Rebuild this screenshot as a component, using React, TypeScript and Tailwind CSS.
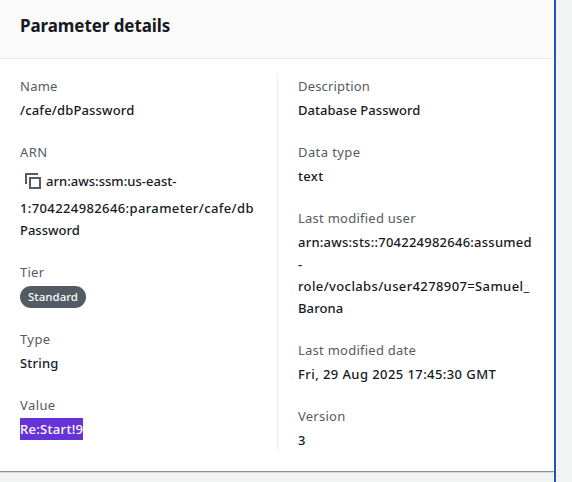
import type { ReactNode } from "react";

function Field({ label, labelClass = "tracking-[0.25px]", children }: { label: string; labelClass?: string; children: ReactNode }) {
  return (
    <div>
      <div className="mb-0.5 h-[22px] text-[#545b64]">
        <span className={labelClass}>{label}</span>
      </div>
      <div className="font-medium text-[#16191f]">{children}</div>
    </div>
  );
}

function CopyIcon() {
  return (
    <svg width="16" height="16" viewBox="0 0 16 16" fill="none" stroke="#545b64" strokeWidth="2" className="shrink-0">
      <path d="M1 11V1h12" />
      <path d="M5 5h10v10H5z" />
    </svg>
  );
}

export default function App() {
  return (
    <div className="flex h-[482px] w-[572px] overflow-hidden bg-[#f2f3f3] font-['Noto_Sans',sans-serif] text-[13px] leading-[22px] whitespace-nowrap">
      <div className="w-[554px]">
        <section className="h-[472px] border-b border-[#879596] bg-white shadow-[0_1px_0_0_#d5dbdb]">
          <header className="flex h-[59px] items-start border-b border-[#eaeded] bg-[#fafafa] pt-[15px] pl-5">
            <h2 className="text-[17px] leading-[22px] font-bold tracking-[-0.08px] text-[#16191f]">Parameter details</h2>
          </header>
          <div className="flex pt-4 pl-5">
            <div className="flex h-[376px] w-[258px] flex-col gap-5 border-r border-[#eaeded]">
              <Field label="Name">
                <span className="tracking-[0.17px]">/cafe/dbPassword</span>
              </Field>
              <Field label="ARN" labelClass="tracking-[0.4px]">
                <div className="flex h-8 items-center gap-[5px] pl-[5px]">
                  <CopyIcon />
                  <span className="tracking-[0.03px]">arn:aws:ssm:us-east-</span>
                </div>
                <div className="tracking-[0.38px]">1:704224982646:parameter/cafe/db</div>
                <div>Password</div>
              </Field>
              <Field label="Tier">
                <div className="flex h-[23px] items-start pt-px">
                  <span className="h-[22px] w-[66px] rounded-full bg-[#545b64] text-center text-[11.5px] leading-[22px] text-[#fafafa]">
                    Standard
                  </span>
                </div>
              </Field>
              <Field label="Type" labelClass="tracking-[0.4px]">
                <span className="tracking-[0.2px]">String</span>
              </Field>
              <Field label="Value" labelClass="tracking-[0.4px]">
                <span className="inline-block h-[22px] w-[63px] bg-[#6633d6] tracking-[0.3px] text-white">Re:Start!9</span>
              </Field>
            </div>
            <div className="flex flex-col gap-5 pl-5">
              <Field label="Description" labelClass="tracking-[0.18px]">
                <span className="tracking-[0.04px]">Database Password</span>
              </Field>
              <Field label="Data type" labelClass="tracking-[0.4px]">
                <span className="tracking-[0.3px]">text</span>
              </Field>
              <Field label="Last modified user">
                <div className="tracking-[0.24px]">arn:aws:sts::704224982646:assumed</div>
                <div>-</div>
                <div className="tracking-[0.38px]">role/voclabs/user4278907=Samuel_</div>
                <div className="tracking-[0.12px]">Barona</div>
              </Field>
              <Field label="Last modified date">
                <span className="tracking-[0.42px]">Fri, 29 Aug 2025 17:45:30 GMT</span>
              </Field>
              <Field label="Version">3</Field>
            </div>
          </div>
        </section>
      </div>
      <div className="w-0.5 bg-[#2456b5]" />
    </div>
  );
}
